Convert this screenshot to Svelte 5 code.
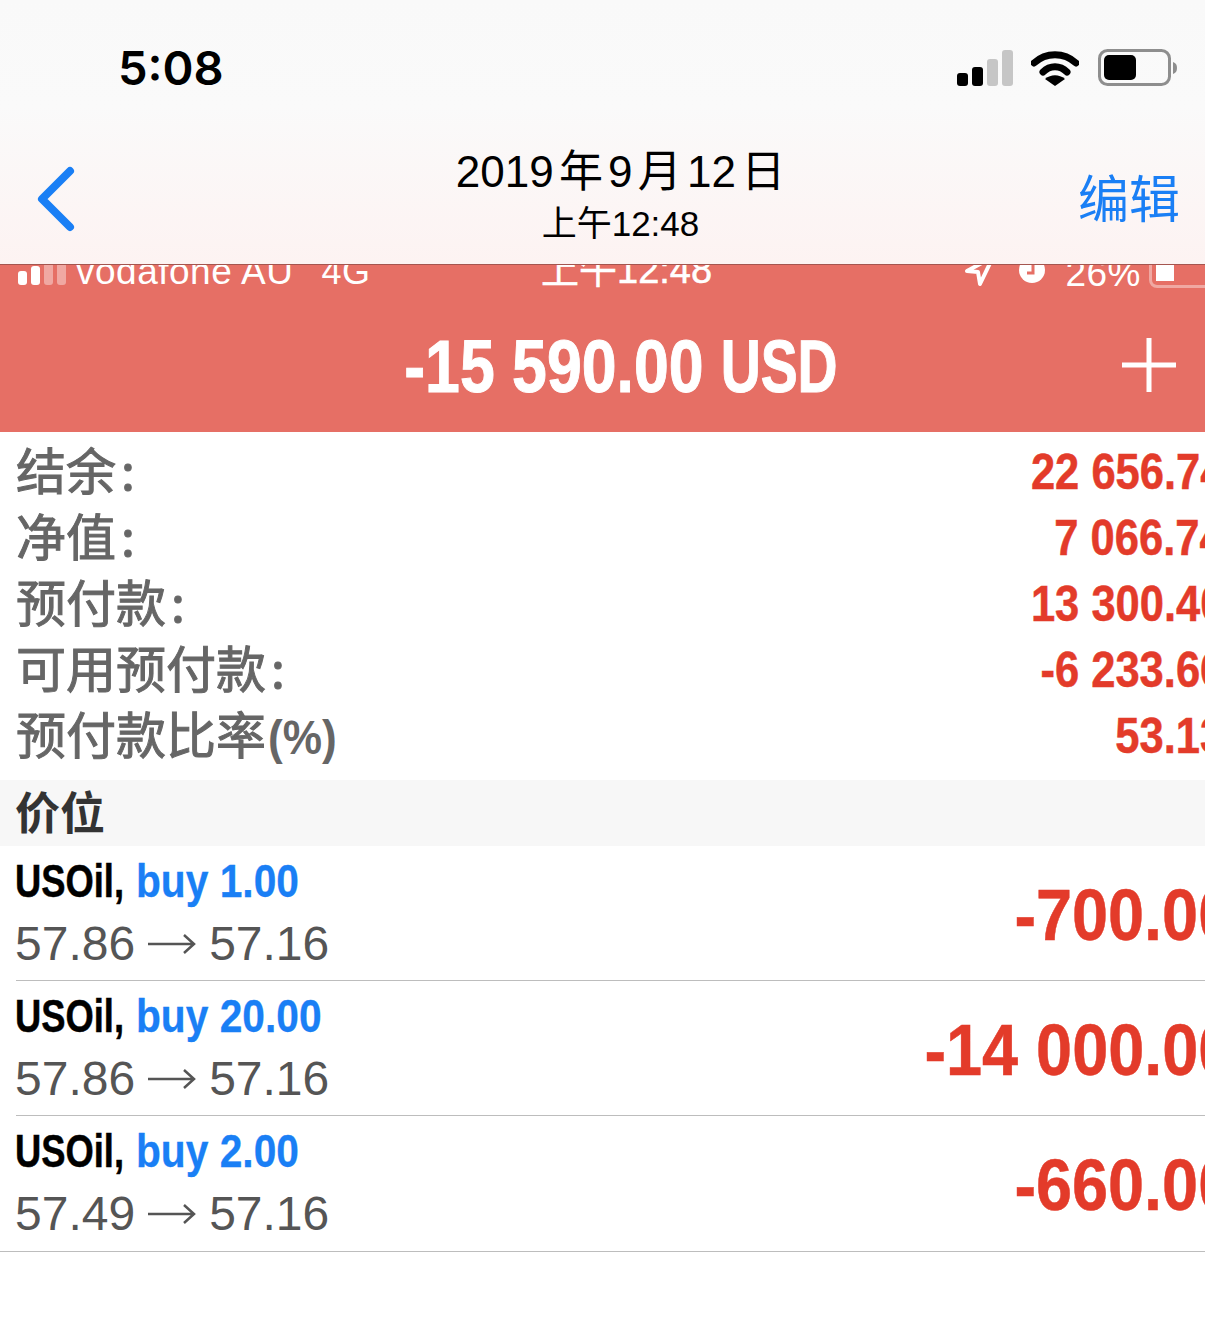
<script>
	const summary = [
		{ label: '结余', mark: ':', value: '22 656.74' },
		{ label: '净值', mark: ':', value: '7 066.74' },
		{ label: '预付款', mark: ':', value: '13 300.40' },
		{ label: '可用预付款', mark: ':', value: '-6 233.66' },
		{ label: '预付款比率', mark: '(%)', value: '53.13' }
	];
	const positions = [
		{ lot: 'buy 1.00', open: '57.86', close: '57.16', profit: '-700.00' },
		{ lot: 'buy 20.00', open: '57.86', close: '57.16', profit: '-14 000.00' },
		{ lot: 'buy 2.00', open: '57.49', close: '57.16', profit: '-660.00' }
	];
</script>

<div class="page">
	<header class="nav">
		<div class="status">
			<span class="clock">5:08</span>
			<div class="status-icons">
				<svg width="56" height="36" viewBox="0 0 56 36">
					<rect x="0" y="23" width="11" height="13" rx="3" fill="#000" />
					<rect x="15" y="17" width="11" height="19" rx="3" fill="#000" />
					<rect x="30" y="9" width="11" height="27" rx="3" fill="#c6c6c6" />
					<rect x="45" y="0" width="11" height="36" rx="3" fill="#c6c6c6" />
				</svg>
				<svg class="wifi" width="48" height="36" viewBox="0 0 48 36">
					<path d="M3 13C15 2 33 2 45 13" fill="none" stroke="#000" stroke-width="7" stroke-linecap="round" />
					<path d="M12 22C19 15 29 15 36 22" fill="none" stroke="#000" stroke-width="7" stroke-linecap="round" />
					<path d="M24 36L14 29C20 24 28 24 34 29Z" fill="#000" />
				</svg>
				<svg class="battery" width="80" height="38" viewBox="0 0 80 38">
					<rect x="1.5" y="1.5" width="70" height="34" rx="8" fill="none" stroke="#8e8e8e" stroke-width="3" />
					<rect x="6" y="6" width="32" height="25" rx="5" fill="#000" />
					<path d="M75 13C78 14 79 16 79 19S78 24 75 25Z" fill="#8e8e8e" />
				</svg>
			</div>
		</div>
		<div class="titlebar">
			<svg class="back" width="40" height="66" viewBox="0 0 40 66">
				<path d="M33 5L5 33L33 61" fill="none" stroke="#1a7ff5" stroke-width="8" stroke-linecap="round" stroke-linejoin="round" />
			</svg>
			<div class="title">
				<div class="date">2019 年 9 月 12 日</div>
				<div class="time">上午12:48</div>
			</div>
			<span class="edit">编辑</span>
		</div>
	</header>

	<section class="banner">
		<div class="shot-status">
			<div class="shot-left">
				<svg width="48" height="22" viewBox="0 0 48 22">
					<rect x="0" y="8" width="9" height="14" rx="3" fill="#fff" />
					<rect x="13" y="3" width="9" height="19" rx="3" fill="#fff" />
					<rect x="26" y="0" width="9" height="22" rx="3" fill="#f0a8a2" />
					<rect x="39" y="0" width="9" height="22" rx="3" fill="#f0a8a2" />
				</svg>
				<span class="carrier">vodafone AU</span>
				<span class="carrier net">4G</span>
			</div>
			<span class="shot-time">上午12:48</span>
			<div class="shot-right">
				<svg class="shot-arrow" width="30" height="24" viewBox="0 0 30 24">
					<path d="M2 6L28 -8L15 19L13 7Z" fill="none" stroke="#fff" stroke-width="4" stroke-linejoin="round" />
				</svg>
				<svg class="shot-clock" width="26" height="26" viewBox="0 0 26 26">
					<circle cx="13" cy="5" r="13" fill="#fff" />
					<path d="M14 0V8H8" fill="none" stroke="#e66f65" stroke-width="3" />
				</svg>
				<span class="carrier pct">26%</span>
				<div class="shot-battery"><div class="shot-fill"></div></div>
			</div>
		</div>
		<div class="profit-row">
			<span class="total">-15 590.00 <span class="currency">USD</span></span>
			<svg class="plus" width="54" height="54" viewBox="0 0 54 54">
				<path d="M27 0V54M0 27H54" stroke="#fff" stroke-width="5" />
			</svg>
		</div>
	</section>

	<section class="summary">
		{#each summary as row}
			<div class="summary-row">
				<span class="label">{row.label}<span class="mark" class:unit={row.mark !== ':'}>{row.mark}</span></span>
				<span class="amount">{row.value}</span>
			</div>
		{/each}
	</section>

	<div class="section-head">价位</div>

	<section class="positions">
		{#each positions as pos}
			<div class="position">
				<div class="pos-left">
					<div class="pos-name"><b>USOil,</b><span class="lot">{pos.lot}</span></div>
					<div class="pos-price">
						<span>{pos.open}</span>
						<svg width="48" height="24" viewBox="0 0 48 24">
							<path d="M0 12H46M36 3L46 12L36 21" fill="none" stroke="#555" stroke-width="2.5" />
						</svg>
						<span>{pos.close}</span>
					</div>
				</div>
				<span class="pos-profit">{pos.profit}</span>
			</div>
		{/each}
	</section>
</div>

<style>
	:global(body) {
		margin: 0;
		background: #fff;
	}
	.page {
		width: 1205px;
		height: 1339px;
		overflow: hidden;
		background: #fff;
		font-family: 'Liberation Sans', 'Noto Sans CJK SC', sans-serif;
	}
	.nav {
		height: 265px;
		box-sizing: border-box;
		background: linear-gradient(#f9f9f9, #fafafa 40%, #fdf3f2);
		border-bottom: 1px solid #a5554f;
	}
	.status {
		height: 135px;
		box-sizing: border-box;
		padding: 42px 27px 0 118px;
		display: flex;
		justify-content: space-between;
	}
	.clock {
		font-family: Inter, sans-serif;
		font-size: 47px;
		font-weight: 600;
		line-height: 52px;
		color: #000;
	}
	.status-icons {
		display: flex;
		align-items: flex-start;
		padding-top: 8px;
	}
	.wifi {
		margin-left: 18px;
	}
	.battery {
		margin-left: 19px;
		margin-top: -1px;
	}
	.titlebar {
		display: grid;
		grid-template-columns: 1fr auto 1fr;
		align-items: start;
		padding: 0 25px 0 37px;
	}
	.back {
		margin-top: 31px;
	}
	.title {
		text-align: center;
		color: #000;
		margin-left: 24px;
		margin-top: 2px;
	}
	.date {
		font-size: 44px;
		line-height: 69px;
		word-spacing: -7px;
		white-space: nowrap;
	}
	.time {
		font-size: 35px;
		line-height: 36px;
		white-space: nowrap;
	}
	.edit {
		justify-self: end;
		margin-top: 27px;
		font-family: 'Noto Sans CJK SC', sans-serif;
		font-size: 51px;
		line-height: 68px;
		color: #1a7ff5;
	}
	.banner {
		height: 167px;
		background: #e66f65;
		overflow: hidden;
		color: #fff;
	}
	.shot-status {
		height: 20px;
		display: flex;
		align-items: flex-start;
		justify-content: space-between;
		padding-left: 18px;
		position: relative;
	}
	.shot-left {
		display: flex;
		align-items: flex-start;
		margin-top: -2px;
	}
	.carrier {
		font-size: 37px;
		line-height: 42px;
		margin-top: -12px;
		margin-left: 10px;
		white-space: nowrap;
		letter-spacing: 0.5px;
	}
	.net {
		margin-left: 28px;
		font-size: 36px;
	}
	.shot-time {
		position: absolute;
		left: 541px;
		top: -20px;
		font-size: 38px;
		line-height: 50px;
		white-space: nowrap;
		-webkit-text-stroke: 0.5px #fff;
	}
	.shot-right {
		display: flex;
		align-items: flex-start;
		margin-right: -20px;
	}
	.shot-arrow {
		overflow: visible;
	}
	.shot-clock {
		margin-left: 24px;
	}
	.pct {
		margin-left: 20px;
		margin-top: -12px;
	}
	.shot-battery {
		width: 70px;
		height: 20px;
		margin-left: 8px;
		border: 3px solid #f0a8a2;
		border-top: 0;
		border-radius: 0 0 8px 8px;
	}
	.shot-fill {
		width: 18px;
		height: 16px;
		margin-left: 4px;
		background: #fff;
	}
	.profit-row {
		height: 147px;
		display: flex;
		align-items: center;
		justify-content: center;
		position: relative;
	}
	.total {
		margin-left: 35px;
		margin-top: 16px;
		font-size: 74px;
		font-weight: 700;
		white-space: nowrap;
		transform: scaleX(0.846);
		-webkit-text-stroke: 1px #fff;
	}
	.currency {
		display: inline-block;
		margin-right: -21px;
		transform: scaleX(0.885);
		transform-origin: left center;
	}
	.plus {
		position: absolute;
		right: 29px;
		top: 53px;
	}
	.summary {
		height: 348px;
		box-sizing: border-box;
		padding-top: 7px;
	}
	.summary-row {
		height: 66px;
		padding-left: 16px;
		display: flex;
		justify-content: space-between;
		align-items: center;
		overflow: hidden;
	}
	.label {
		font-family: 'Noto Sans CJK SC', sans-serif;
		font-size: 50px;
		color: #666;
		line-height: 66px;
		margin-top: -8px;
		-webkit-text-stroke: 1px #666;
		white-space: nowrap;
	}
	.mark {
		margin-left: 5px;
	}
	.unit {
		display: inline-block;
		margin-left: 2px;
		font-family: 'Liberation Sans', sans-serif;
		font-size: 48px;
		font-weight: 700;
		line-height: 1;
		transform: scaleX(0.92);
		transform-origin: left center;
		-webkit-text-stroke: 0;
	}
	.amount {
		flex-shrink: 0;
		font-size: 50px;
		font-weight: 700;
		color: #e33b2a;
		white-space: nowrap;
		transform: scaleX(0.87);
		transform-origin: right center;
		margin-right: -19px;
		-webkit-text-stroke: 0.5px #e33b2a;
	}
	.section-head {
		height: 66px;
		box-sizing: border-box;
		padding-left: 15px;
		background: #f7f7f7;
		color: #333;
		font-size: 45px;
		font-weight: 700;
		line-height: 70px;
	}
	.position {
		height: 135px;
		box-sizing: border-box;
		margin-left: 16px;
		border-bottom: 1px solid #bdbdbd;
		display: flex;
		justify-content: space-between;
		align-items: center;
		overflow: hidden;
	}
	.position:last-child {
		height: 136px;
		margin-left: 0;
		padding-left: 16px;
		padding-bottom: 1px;
	}
	.pos-name {
		display: flex;
		margin: -1px 0 1px -1px;
		font-size: 46px;
		line-height: 62px;
		font-weight: 700;
		color: #000;
		white-space: nowrap;
	}
	.pos-name b {
		display: block;
		width: 121px;
		transform: scaleX(0.79);
		transform-origin: left center;
		-webkit-text-stroke: 0.5px #000;
	}
	.lot {
		color: #1a7ff5;
		transform: scaleX(0.885);
		transform-origin: left center;
		-webkit-text-stroke: 0.3px #1a7ff5;
	}
	.pos-price {
		font-size: 48px;
		line-height: 62px;
		color: #555;
		display: flex;
		align-items: center;
		gap: 13px;
		margin-left: -1px;
	}
	.pos-profit {
		flex-shrink: 0;
		font-size: 72px;
		font-weight: 700;
		color: #e33b2a;
		white-space: nowrap;
		transform: scaleX(0.9);
		transform-origin: right center;
		margin-right: -29px;
		margin-top: 4px;
		-webkit-text-stroke: 0.5px #e33b2a;
	}
</style>
